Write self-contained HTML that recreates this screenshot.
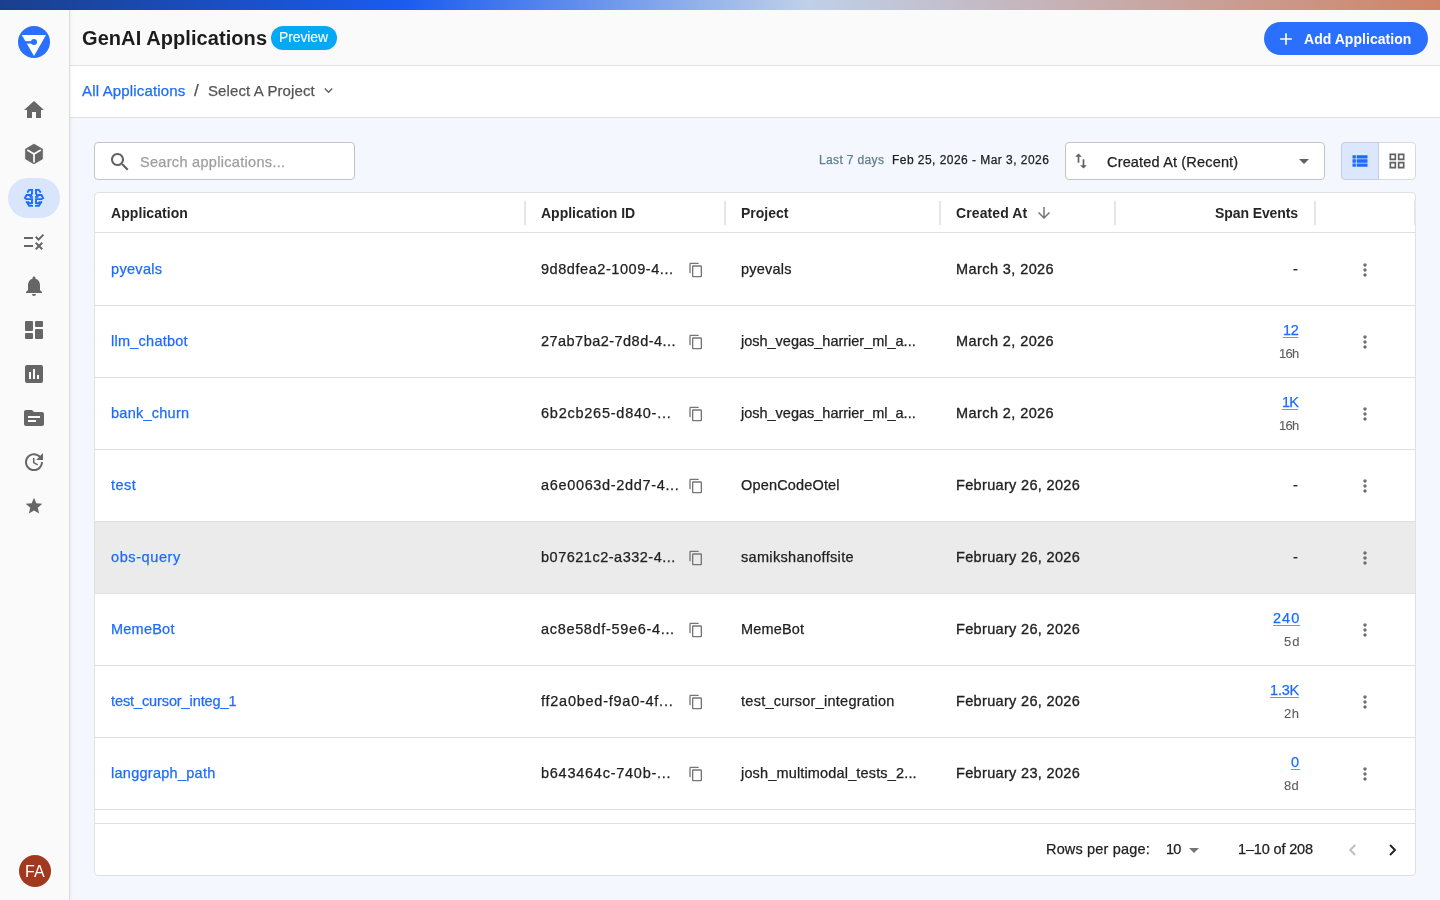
<!DOCTYPE html>
<html><head><meta charset="utf-8"><title>GenAI Applications</title>
<style>
*{box-sizing:border-box;margin:0;padding:0}
html,body{width:1440px;height:900px;overflow:hidden}
body{font-family:"Liberation Sans",sans-serif;background:#f4f7fe;color:#212121;position:relative}
.abs{position:absolute}
.ico{position:absolute;display:block;overflow:visible}
.t{position:absolute;white-space:nowrap;line-height:1;font-size:14.5px;will-change:transform;-webkit-text-stroke-width:.25px}
.b{-webkit-text-stroke-width:0}
.b{font-weight:700;color:#262626}
.lnk{color:#1c6cfc}
.sep{position:absolute;top:201px;width:2px;height:24px;background:#e6e6e6}
.hl{position:absolute;left:95px;width:1320px;height:1px;background:#e0e0e0}
</style></head><body>
<div class="abs" style="left:0;top:0;width:1440px;height:10px;background:linear-gradient(90deg,#1a3f8c 0%,#1a5cf0 28%,#bfd0e9 56%,#cf8468 100%)"></div>
<div class="abs" style="left:70px;top:10px;width:1370px;height:56px;background:#fafafa;border-bottom:1px solid #e0e0e0"></div>
<div class="abs" style="left:70px;top:66px;width:1370px;height:52px;background:#fff;border-bottom:1px solid #e0e0e0"></div>
<div class="abs" style="left:0;top:10px;width:70px;height:890px;background:#fafafa;border-right:1px solid #dcdcdc;box-shadow:1px 0 3px rgba(0,0,0,.05)"></div>
<svg class="ico" style="left:18px;top:26px;width:32px;height:32px" viewBox="0 0 32 32"><circle cx="16" cy="16" r="16" fill="#2a6ffd"/><path d="M3.8 9 H28 L16 30 Z" fill="#fff"/><path d="M3 16.4 H14" stroke="#2a6ffd" stroke-width="2.4"/><circle cx="16" cy="16" r="3" fill="#2a6ffd"/></svg>
<svg class="ico" style="left:22px;top:98px;width:24px;height:24px" viewBox="0 0 24 24" fill="#666666"><path d="M10 20v-6h4v6h5v-8h3L12 3 2 12h3v8z"/></svg>
<svg class="ico" style="left:22px;top:142px;width:24px;height:24px" viewBox="0 0 24 24"><path d="M12 2.1 20.6 7.1 V16.9 L12 21.9 L3.4 16.9 V7.1 Z" fill="#666666" stroke="#666666" stroke-width=".6" stroke-linejoin="round"/><path d="M5.3 8 L12 11.9 L18.8 8 M12 11.9 V20.4" stroke="#fff" stroke-width="1.7" fill="none"/></svg>
<div class="abs" style="left:8px;top:178px;width:52px;height:40px;border-radius:20px;background:#d9e5fb"></div>
<svg class="ico" style="left:24px;top:188px;width:20px;height:20px" viewBox="0 0 20 20" fill="none" stroke="#1c6cfc" stroke-width="1.9"><g id="brh"><path d="M3.3 4.6 L5.2 1.9 H9 M8 1.9 V5.6 L7.2 7 H2.6 L0.9 10 L2.4 11.1 H9 M8 11.1 V16"/><path d="M5.6 8.1 L7.2 9.2"/><circle cx="8" cy="9.1" r="1.1" fill="#1c6cfc" stroke="none"/><path d="M2.3 13.3 L5.1 17.9 H9 M3.9 13.7 L5.2 15.2 H8"/></g><use href="#brh" transform="translate(20 0) scale(-1 1)"/></svg>
<svg class="ico" style="left:22px;top:230px;width:24px;height:24px" viewBox="0 0 24 24" fill="#666666"><path d="M16.54 11 13 7.46l1.41-1.41 2.12 2.12 4.24-4.24 1.41 1.41L16.54 11zM11 7H2v2h9V7zm10 6.41L19.59 12 17 14.59 14.41 12 13 13.41 15.59 16 13 18.59 14.41 20 17 17.41 19.59 20 21 18.59 18.41 16 21 13.41zM11 15H2v2h9v-2z"/></svg>
<svg class="ico" style="left:22px;top:274px;width:24px;height:24px" viewBox="0 0 24 24" fill="#666666"><path d="M12 22c1.1 0 2-.9 2-2h-4c0 1.1.89 2 2 2zm6-6v-5c0-3.070-1.64-5.64-4.5-6.32V4c0-.83-.67-1.5-1.5-1.5s-1.5.67-1.5 1.5v.68C7.63 5.36 6 7.920 6 11v5l-2 2v1h16v-1l-2-2z"/></svg>
<svg class="ico" style="left:22px;top:318px;width:24px;height:24px" viewBox="0 0 24 24" fill="#666666"><rect x="3" y="3" width="8" height="10" rx="1"/><rect x="3" y="15" width="8" height="6" rx="1"/><rect x="13" y="11" width="8" height="10" rx="1"/><rect x="13" y="3" width="8" height="6" rx="1"/></svg>
<svg class="ico" style="left:22px;top:362px;width:24px;height:24px" viewBox="0 0 24 24" fill="#666666"><path d="M5 3h14a2 2 0 0 1 2 2v14a2 2 0 0 1-2 2H5a2 2 0 0 1-2-2V5a2 2 0 0 1 2-2zm2 7v7h2v-7H7zm4-3v10h2V7h-2zm4 6v4h2v-4h-2z" fill-rule="evenodd"/></svg>
<svg class="ico" style="left:22px;top:406px;width:24px;height:24px" viewBox="0 0 24 24" fill="#666666"><path d="M20 6h-8l-2-2H4c-1.1 0-1.99.9-1.99 2L2 18c0 1.1.9 2 2 2h16c1.1 0 2-.9 2-2V8c0-1.1-.9-2-2-2zm-6 10H6v-2h8v2zm4-4H6v-2h12v2z"/></svg>
<svg class="ico" style="left:22px;top:450px;width:24px;height:24px" viewBox="0 0 24 24" fill="#666666"><path d="M21 10.12h-6.78l2.74-2.82c-2.73-2.7-7.15-2.8-9.88-.1-2.73 2.71-2.73 7.08 0 9.79s7.15 2.71 9.88 0C18.32 15.65 19 14.08 19 12.1h2c0 1.98-.88 4.55-2.64 6.29-3.51 3.48-9.21 3.48-12.72 0-3.5-3.47-3.53-9.11-.02-12.58s9.14-3.47 12.65 0L21 3v7.12zM12.5 8v4.25l3.5 2.08-.72 1.21L11 13V8h1.5z"/></svg>
<svg class="ico" style="left:24px;top:496px;width:20px;height:20px" viewBox="0 0 24 24" fill="#666666"><path d="M12 17.27 18.18 21l-1.64-7.03L22 9.24l-7.19-.61L12 2 9.19 8.63 2 9.24l5.46 4.73L5.82 21z"/></svg>
<div class="abs" style="left:19px;top:855px;width:32px;height:32px;border-radius:16px;background:#a0391f"></div>
<div class="abs" style="left:19px;top:856px;width:32px;height:32px;color:#fff;font-size:16px;line-height:32px;text-align:center;will-change:transform;letter-spacing:.3px">FA</div>
<div class="t b" style="left:82px;top:28.00px;font-size:20px;letter-spacing:0.076px;color:#1c1c1c">GenAI Applications</div>
<div class="abs" style="left:271px;top:26px;width:66px;height:24px;border-radius:12px;background:#03a9f4"></div>
<div class="t" style="left:279.4px;top:29.80px;font-size:14px;letter-spacing:-0.111px;color:#fff;-webkit-text-stroke-width:.1px">Preview</div>
<div class="abs" style="left:1264px;top:22px;width:164px;height:33px;border-radius:17px;background:#2a6ffd"></div>
<svg class="ico" style="left:1276px;top:28.5px;width:20px;height:20px" viewBox="0 0 24 24" fill="#fff"><path d="M19 13h-6v6h-2v-6H5v-2h6V5h2v6h6v2z"/></svg>
<div class="t b" style="left:1304px;top:32.00px;font-size:14px;letter-spacing:0.036px;color:#fff">Add Application</div>
<div class="t lnk" style="left:82px;top:83.00px;font-size:15px;letter-spacing:0.156px;">All Applications</div>
<div class="t" style="left:194px;top:82px;font-size:17px;color:#555">/</div>
<div class="t" style="left:208px;top:83.00px;font-size:15px;letter-spacing:0.113px;color:#555">Select A Project</div>
<svg class="ico" style="left:320px;top:82px;width:17px;height:17px" viewBox="0 0 24 24" fill="#616161"><path d="M16.59 8.59 12 13.17 7.41 8.59 6 10l6 6 6-6z"/></svg>
<div class="abs" style="left:94px;top:142px;width:261px;height:38px;border:1px solid #c4c4c4;border-radius:4px;background:#fff"></div>
<svg class="ico" style="left:108px;top:150px;width:24px;height:24px" viewBox="0 0 24 24" fill="#616161"><path d="M15.5 14h-.79l-.28-.27C15.41 12.59 16 11.11 16 9.5 16 5.91 13.09 3 9.5 3S3 5.91 3 9.5 5.91 16 9.5 16c1.61 0 3.09-.59 4.23-1.57l.27.28v.79l5 4.99L20.49 19l-4.99-5zm-6 0C7.01 14 5 11.990 5 9.5S7.01 5 9.5 5 14 7.01 14 9.5 11.99 14 9.5 14z"/></svg>
<div class="t" style="left:140px;top:155.00px;letter-spacing:0.307px;color:#9e9e9e">Search applications...</div>
<div class="t" style="left:819px;top:154.40px;font-size:12px;letter-spacing:0.356px;color:#5f7d8c">Last 7 days</div>
<div class="t" style="left:892px;top:154.40px;font-size:12px;letter-spacing:0.456px;color:#212121">Feb 25, 2026 - Mar 3, 2026</div>
<div class="abs" style="left:1065px;top:142px;width:260px;height:38px;border:1px solid #c4c4c4;border-radius:4px;background:#fff"></div>
<svg class="ico" style="left:1071px;top:151px;width:20px;height:20px" viewBox="0 0 24 24" fill="#616161"><path d="M16 17.01V10h-2v7.01h-3L15 21l4-3.99h-3zM9 3 5 6.99h3V14h2V6.99h3L9 3z"/></svg>
<div class="t" style="left:1107px;top:155.00px;letter-spacing:0.166px;color:#212121">Created At (Recent)</div>
<svg class="ico" style="left:1292px;top:149px;width:24px;height:24px" viewBox="0 0 24 24" fill="#616161"><path d="M7 10l5 5 5-5z"/></svg>
<div class="abs" style="left:1341px;top:142px;width:75px;height:38px;border:1px solid #dadada;border-radius:4px;background:#fff"></div>
<div class="abs" style="left:1341px;top:142px;width:38px;height:38px;border:1px solid #c3cde3;border-radius:4px 0 0 4px;background:#dce6fc"></div>
<svg class="ico" style="left:1350px;top:151px;width:20px;height:20px" viewBox="0 0 24 24" fill="#1c6cfc"><path d="M3 14h4v-4H3zm0 5h4v-4H3zM3 9h4V5H3zm5 5h13v-4H8zm0 5h13v-4H8zM8 5v4h13V5z"/></svg>
<svg class="ico" style="left:1387px;top:151px;width:20px;height:20px" viewBox="0 0 24 24" fill="#616161"><path d="M3 3v8h8V3H3zm6 6H5V5h4v4zm-6 4v8h8v-8H3zm6 6H5v-4h4v4zm4-16v8h8V3h-8zm6 6h-4V5h4v4zm-6 4v8h8v-8h-8zm6 6h-4v-4h4v4z"/></svg>
<div class="abs" style="left:94px;top:192px;width:1322px;height:684px;border:1px solid #e0e0e0;border-radius:4px;background:#fff"></div>
<div class="hl" style="top:232px"></div>
<div class="sep" style="left:524px"></div>
<div class="sep" style="left:724px"></div>
<div class="sep" style="left:939px"></div>
<div class="sep" style="left:1114px"></div>
<div class="sep" style="left:1314px"></div>
<div class="sep" style="left:1414px"></div>
<div class="t b" style="left:111px;top:206.00px;font-size:14px;letter-spacing:0.07px;">Application</div>
<div class="t b" style="left:541px;top:206.00px;font-size:14px;letter-spacing:0.005px;">Application ID</div>
<div class="t b" style="left:741px;top:206.00px;font-size:14px;letter-spacing:0px;">Project</div>
<div class="t b" style="left:956px;top:206.00px;font-size:14px;letter-spacing:0.104px;">Created At</div>
<div class="t b" style="left:1215px;top:206.00px;font-size:14px;letter-spacing:-0.091px;">Span Events</div>
<svg class="ico" style="left:1035px;top:204px;width:18px;height:18px" viewBox="0 0 24 24" fill="#757575"><path d="M20 12l-1.41-1.41L13 16.17V4h-2v12.17l-5.58-5.59L4 12l8 8 8-8z"/></svg>
<div class="abs" style="left:95px;top:522px;width:1320px;height:71px;background:#ebebeb"></div>
<div class="hl" style="top:305px"></div>
<div class="hl" style="top:377px"></div>
<div class="hl" style="top:449px"></div>
<div class="hl" style="top:521px"></div>
<div class="hl" style="top:593px"></div>
<div class="hl" style="top:665px"></div>
<div class="hl" style="top:737px"></div>
<div class="hl" style="top:809px"></div>
<div class="hl" style="top:823px"></div>
<div class="t lnk" style="left:111px;top:261.67px;letter-spacing:0.322px;">pyevals</div>
<div class="t" style="left:541px;top:261.67px;letter-spacing:0.56px;">9d8dfea2-1009-4...</div>
<svg class="ico" style="left:688px;top:262px;width:16px;height:16px" viewBox="0 0 24 24" fill="#757575"><path d="M16 1H4c-1.1 0-2 .9-2 2v14h2V3h12V1zm3 4H8c-1.1 0-2 .9-2 2v14c0 1.1.9 2 2 2h11c1.1 0 2-.9 2-2V7c0-1.1-.9-2-2-2zm0 16H8V7h11v14z"/></svg>
<div class="t" style="left:741px;top:261.67px;letter-spacing:0.218px;">pyevals</div>
<div class="t" style="left:956px;top:261.67px;letter-spacing:0.414px;-webkit-text-stroke-width:.32px">March 3, 2026</div>
<div class="t" style="right:142px;top:261.67px">-</div>
<svg class="ico" style="left:1355px;top:260px;width:20px;height:20px" viewBox="0 0 24 24" fill="#6e6e6e"><path d="M12 8c1.1 0 2-.9 2-2s-.9-2-2-2-2 .9-2 2 .9 2 2 2zm0 2c-1.1 0-2 .9-2 2s.9 2 2 2 2-.9 2-2-.9-2-2-2zm0 6c-1.1 0-2 .9-2 2s.9 2 2 2 2-.9 2-2-.9-2-2-2z"/></svg>
<div class="t lnk" style="left:111px;top:333.67px;letter-spacing:0.248px;">llm_chatbot</div>
<div class="t" style="left:541px;top:333.67px;letter-spacing:0.466px;">27ab7ba2-7d8d-4...</div>
<svg class="ico" style="left:688px;top:334px;width:16px;height:16px" viewBox="0 0 24 24" fill="#757575"><path d="M16 1H4c-1.1 0-2 .9-2 2v14h2V3h12V1zm3 4H8c-1.1 0-2 .9-2 2v14c0 1.1.9 2 2 2h11c1.1 0 2-.9 2-2V7c0-1.1-.9-2-2-2zm0 16H8V7h11v14z"/></svg>
<div class="t" style="left:741px;top:333.67px;letter-spacing:-0.009px;">josh_vegas_harrier_ml_a...</div>
<div class="t" style="left:956px;top:333.67px;letter-spacing:0.414px;-webkit-text-stroke-width:.32px">March 2, 2026</div>
<div class="t lnk" style="right:141.39px;top:323.27px;letter-spacing:-0.387px;text-decoration:underline;text-underline-offset:1.5px;text-decoration-thickness:1px;text-decoration-color:rgba(28,108,252,.7)">12</div>
<div class="t" style="right:141.68px;top:346.75px;font-size:13px;color:#5c5c5c;-webkit-text-stroke-width:.1px;letter-spacing:-0.675px">16h</div>
<svg class="ico" style="left:1355px;top:332px;width:20px;height:20px" viewBox="0 0 24 24" fill="#6e6e6e"><path d="M12 8c1.1 0 2-.9 2-2s-.9-2-2-2-2 .9-2 2 .9 2 2 2zm0 2c-1.1 0-2 .9-2 2s.9 2 2 2 2-.9 2-2-.9-2-2-2zm0 6c-1.1 0-2 .9-2 2s.9 2 2 2 2-.9 2-2-.9-2-2-2z"/></svg>
<div class="t lnk" style="left:111px;top:405.67px;letter-spacing:0.256px;">bank_churn</div>
<div class="t" style="left:541px;top:405.67px;letter-spacing:0.756px;">6b2cb265-d840-...</div>
<svg class="ico" style="left:688px;top:406px;width:16px;height:16px" viewBox="0 0 24 24" fill="#757575"><path d="M16 1H4c-1.1 0-2 .9-2 2v14h2V3h12V1zm3 4H8c-1.1 0-2 .9-2 2v14c0 1.1.9 2 2 2h11c1.1 0 2-.9 2-2V7c0-1.1-.9-2-2-2zm0 16H8V7h11v14z"/></svg>
<div class="t" style="left:741px;top:405.67px;letter-spacing:-0.009px;">josh_vegas_harrier_ml_a...</div>
<div class="t" style="left:956px;top:405.67px;letter-spacing:0.414px;-webkit-text-stroke-width:.32px">March 2, 2026</div>
<div class="t lnk" style="right:141.80px;top:395.27px;letter-spacing:-0.8px;text-decoration:underline;text-underline-offset:1.5px;text-decoration-thickness:1px;text-decoration-color:rgba(28,108,252,.7)">1K</div>
<div class="t" style="right:141.68px;top:418.75px;font-size:13px;color:#5c5c5c;-webkit-text-stroke-width:.1px;letter-spacing:-0.675px">16h</div>
<svg class="ico" style="left:1355px;top:404px;width:20px;height:20px" viewBox="0 0 24 24" fill="#6e6e6e"><path d="M12 8c1.1 0 2-.9 2-2s-.9-2-2-2-2 .9-2 2 .9 2 2 2zm0 2c-1.1 0-2 .9-2 2s.9 2 2 2 2-.9 2-2-.9-2-2-2zm0 6c-1.1 0-2 .9-2 2s.9 2 2 2 2-.9 2-2-.9-2-2-2z"/></svg>
<div class="t lnk" style="left:111px;top:477.67px;letter-spacing:0.471px;">test</div>
<div class="t" style="left:541px;top:477.67px;letter-spacing:0.661px;">a6e0063d-2dd7-4...</div>
<svg class="ico" style="left:688px;top:478px;width:16px;height:16px" viewBox="0 0 24 24" fill="#757575"><path d="M16 1H4c-1.1 0-2 .9-2 2v14h2V3h12V1zm3 4H8c-1.1 0-2 .9-2 2v14c0 1.1.9 2 2 2h11c1.1 0 2-.9 2-2V7c0-1.1-.9-2-2-2zm0 16H8V7h11v14z"/></svg>
<div class="t" style="left:741px;top:477.67px;letter-spacing:0.164px;">OpenCodeOtel</div>
<div class="t" style="left:956px;top:477.67px;letter-spacing:0.334px;-webkit-text-stroke-width:.32px">February 26, 2026</div>
<div class="t" style="right:142px;top:477.67px">-</div>
<svg class="ico" style="left:1355px;top:476px;width:20px;height:20px" viewBox="0 0 24 24" fill="#6e6e6e"><path d="M12 8c1.1 0 2-.9 2-2s-.9-2-2-2-2 .9-2 2 .9 2 2 2zm0 2c-1.1 0-2 .9-2 2s.9 2 2 2 2-.9 2-2-.9-2-2-2zm0 6c-1.1 0-2 .9-2 2s.9 2 2 2 2-.9 2-2-.9-2-2-2z"/></svg>
<div class="t lnk" style="left:111px;top:549.67px;letter-spacing:0.591px;">obs-query</div>
<div class="t" style="left:541px;top:549.67px;letter-spacing:0.505px;">b07621c2-a332-4...</div>
<svg class="ico" style="left:688px;top:550px;width:16px;height:16px" viewBox="0 0 24 24" fill="#757575"><path d="M16 1H4c-1.1 0-2 .9-2 2v14h2V3h12V1zm3 4H8c-1.1 0-2 .9-2 2v14c0 1.1.9 2 2 2h11c1.1 0 2-.9 2-2V7c0-1.1-.9-2-2-2zm0 16H8V7h11v14z"/></svg>
<div class="t" style="left:741px;top:549.67px;letter-spacing:0.322px;">samikshanoffsite</div>
<div class="t" style="left:956px;top:549.67px;letter-spacing:0.334px;-webkit-text-stroke-width:.32px">February 26, 2026</div>
<div class="t" style="right:142px;top:549.67px">-</div>
<svg class="ico" style="left:1355px;top:548px;width:20px;height:20px" viewBox="0 0 24 24" fill="#6e6e6e"><path d="M12 8c1.1 0 2-.9 2-2s-.9-2-2-2-2 .9-2 2 .9 2 2 2zm0 2c-1.1 0-2 .9-2 2s.9 2 2 2 2-.9 2-2-.9-2-2-2zm0 6c-1.1 0-2 .9-2 2s.9 2 2 2 2-.9 2-2-.9-2-2-2z"/></svg>
<div class="t lnk" style="left:111px;top:621.67px;letter-spacing:0.226px;">MemeBot</div>
<div class="t" style="left:541px;top:621.67px;letter-spacing:0.671px;">ac8e58df-59e6-4...</div>
<svg class="ico" style="left:688px;top:622px;width:16px;height:16px" viewBox="0 0 24 24" fill="#757575"><path d="M16 1H4c-1.1 0-2 .9-2 2v14h2V3h12V1zm3 4H8c-1.1 0-2 .9-2 2v14c0 1.1.9 2 2 2h11c1.1 0 2-.9 2-2V7c0-1.1-.9-2-2-2zm0 16H8V7h11v14z"/></svg>
<div class="t" style="left:741px;top:621.67px;letter-spacing:0.178px;">MemeBot</div>
<div class="t" style="left:956px;top:621.67px;letter-spacing:0.334px;-webkit-text-stroke-width:.32px">February 26, 2026</div>
<div class="t lnk" style="right:140.00px;top:611.27px;letter-spacing:1.0px;text-decoration:underline;text-underline-offset:1.5px;text-decoration-thickness:1px;text-decoration-color:rgba(28,108,252,.7)">240</div>
<div class="t" style="right:140.00px;top:634.75px;font-size:13px;color:#5c5c5c;-webkit-text-stroke-width:.1px;letter-spacing:1.0px">5d</div>
<svg class="ico" style="left:1355px;top:620px;width:20px;height:20px" viewBox="0 0 24 24" fill="#6e6e6e"><path d="M12 8c1.1 0 2-.9 2-2s-.9-2-2-2-2 .9-2 2 .9 2 2 2zm0 2c-1.1 0-2 .9-2 2s.9 2 2 2 2-.9 2-2-.9-2-2-2zm0 6c-1.1 0-2 .9-2 2s.9 2 2 2 2-.9 2-2-.9-2-2-2z"/></svg>
<div class="t lnk" style="left:111px;top:693.67px;letter-spacing:-0.102px;">test_cursor_integ_1</div>
<div class="t" style="left:541px;top:693.67px;letter-spacing:0.748px;">ff2a0bed-f9a0-4f...</div>
<svg class="ico" style="left:688px;top:694px;width:16px;height:16px" viewBox="0 0 24 24" fill="#757575"><path d="M16 1H4c-1.1 0-2 .9-2 2v14h2V3h12V1zm3 4H8c-1.1 0-2 .9-2 2v14c0 1.1.9 2 2 2h11c1.1 0 2-.9 2-2V7c0-1.1-.9-2-2-2zm0 16H8V7h11v14z"/></svg>
<div class="t" style="left:741px;top:693.67px;letter-spacing:0.267px;">test_cursor_integration</div>
<div class="t" style="left:956px;top:693.67px;letter-spacing:0.334px;-webkit-text-stroke-width:.32px">February 26, 2026</div>
<div class="t lnk" style="right:141.18px;top:683.27px;letter-spacing:-0.183px;text-decoration:underline;text-underline-offset:1.5px;text-decoration-thickness:1px;text-decoration-color:rgba(28,108,252,.7)">1.3K</div>
<div class="t" style="right:140.46px;top:706.75px;font-size:13px;color:#5c5c5c;-webkit-text-stroke-width:.1px;letter-spacing:0.537px">2h</div>
<svg class="ico" style="left:1355px;top:692px;width:20px;height:20px" viewBox="0 0 24 24" fill="#6e6e6e"><path d="M12 8c1.1 0 2-.9 2-2s-.9-2-2-2-2 .9-2 2 .9 2 2 2zm0 2c-1.1 0-2 .9-2 2s.9 2 2 2 2-.9 2-2-.9-2-2-2zm0 6c-1.1 0-2 .9-2 2s.9 2 2 2 2-.9 2-2-.9-2-2-2z"/></svg>
<div class="t lnk" style="left:111px;top:765.67px;letter-spacing:0.27px;">langgraph_path</div>
<div class="t" style="left:541px;top:765.67px;letter-spacing:0.747px;">b643464c-740b-...</div>
<svg class="ico" style="left:688px;top:766px;width:16px;height:16px" viewBox="0 0 24 24" fill="#757575"><path d="M16 1H4c-1.1 0-2 .9-2 2v14h2V3h12V1zm3 4H8c-1.1 0-2 .9-2 2v14c0 1.1.9 2 2 2h11c1.1 0 2-.9 2-2V7c0-1.1-.9-2-2-2zm0 16H8V7h11v14z"/></svg>
<div class="t" style="left:741px;top:765.67px;letter-spacing:0.158px;">josh_multimodal_tests_2...</div>
<div class="t" style="left:956px;top:765.67px;letter-spacing:0.334px;-webkit-text-stroke-width:.32px">February 23, 2026</div>
<div class="t lnk" style="right:140.00px;top:755.27px;letter-spacing:1.0px;text-decoration:underline;text-underline-offset:1.5px;text-decoration-thickness:1px;text-decoration-color:rgba(28,108,252,.7)">0</div>
<div class="t" style="right:140.83px;top:778.75px;font-size:13px;color:#5c5c5c;-webkit-text-stroke-width:.1px;letter-spacing:0.171px">8d</div>
<svg class="ico" style="left:1355px;top:764px;width:20px;height:20px" viewBox="0 0 24 24" fill="#6e6e6e"><path d="M12 8c1.1 0 2-.9 2-2s-.9-2-2-2-2 .9-2 2 .9 2 2 2zm0 2c-1.1 0-2 .9-2 2s.9 2 2 2 2-.9 2-2-.9-2-2-2zm0 6c-1.1 0-2 .9-2 2s.9 2 2 2 2-.9 2-2-.9-2-2-2z"/></svg>
<div class="t" style="left:1046px;top:841.67px;letter-spacing:0.167px;">Rows per page:</div>
<div class="t" style="left:1166px;top:841.67px;letter-spacing:-0.723px;">10</div>
<svg class="ico" style="left:1182px;top:838px;width:24px;height:24px" viewBox="0 0 24 24" fill="#757575"><path d="M7 10l5 5 5-5z"/></svg>
<div class="t" style="left:1238px;top:841.67px;letter-spacing:-0.158px;">1–10 of 208</div>
<svg class="ico" style="left:1342px;top:840px;width:20px;height:20px" viewBox="0 0 20 20" fill="none" stroke="#bdbdbd" stroke-width="1.9"><path d="M13.2 5 L8.2 10 L13.2 15"/></svg>
<svg class="ico" style="left:1382px;top:840px;width:20px;height:20px" viewBox="0 0 20 20" fill="none" stroke="#212121" stroke-width="1.9"><path d="M8 5 L13 10 L8 15"/></svg>
</body></html>
